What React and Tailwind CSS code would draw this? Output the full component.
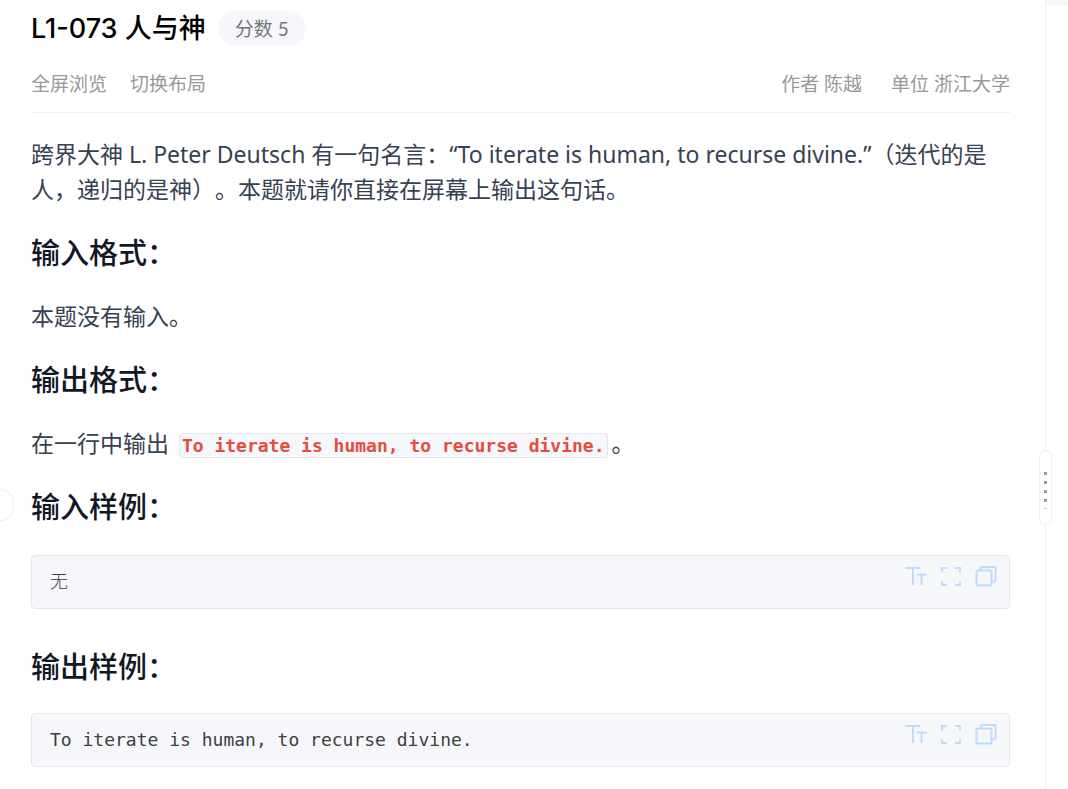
import React, { useState } from 'react';

const problem = {
  title: 'L1-073 人与神',
  score: 5,
  author: '陈越',
  organization: '浙江大学',
};

const OUTPUT_TEXT = 'To iterate is human, to recurse divine.';

const FontSizeIcon = () => (
  <svg width="22" height="22" viewBox="0 0 22 22" fill="none" stroke="currentColor" strokeWidth="2">
    <path d="M0.5 3H15.5M8 3V20M12 9.5H21.5M16.5 9.5V20" />
  </svg>
);

const FullscreenIcon = () => (
  <svg width="22" height="22" viewBox="0 0 22 22" fill="none" stroke="currentColor" strokeWidth="2">
    <path d="M2 7.5V3H7M15 3H20V7.5M20 16V20H15M7 20H2V16" />
  </svg>
);

const CopyIcon = () => (
  <svg width="22" height="22" viewBox="0 0 22 22" fill="none" stroke="currentColor" strokeWidth="2" strokeLinejoin="round">
    <rect x="1.5" y="5.5" width="15" height="15" rx="1.5" />
    <path d="M5.5 5.5V3.5a1.5 1.5 0 0 1 1.5 -1.5H19a1.5 1.5 0 0 1 1.5 1.5V15a1.5 1.5 0 0 1 -1.5 1.5H16.5" />
  </svg>
);

const SectionTitle = ({ children }) => (
  <h2 className="text-[29px] leading-9 font-medium text-gray-900">{children}</h2>
);

const Sample = ({ text }) => {
  const [large, setLarge] = useState(false);

  const handleCopy = () => {
    navigator.clipboard.writeText(text);
  };

  return (
    <div className="flex items-start justify-between rounded border border-[#e5e7eb] bg-[#f5f7fa] pl-[18px] pr-3">
      <pre
        className={`py-3 leading-7 font-light text-[#404040] font-['DejaVu_Sans_Mono','Noto_Sans_CJK_SC',monospace] ${large ? 'text-2xl' : 'text-[18px]'}`}
      >
        {text}
      </pre>
      <div className="mt-[9px] flex gap-[13px] text-[#bfdbfe]">
        <button type="button" aria-label="字号" onClick={() => setLarge(!large)}>
          <FontSizeIcon />
        </button>
        <button type="button" aria-label="全屏">
          <FullscreenIcon />
        </button>
        <button type="button" aria-label="复制" onClick={handleCopy}>
          <CopyIcon />
        </button>
      </div>
    </div>
  );
};

const App = () => {
  const [collapsed, setCollapsed] = useState(false);

  return (
    <div className="relative flex min-h-screen bg-white text-[23px] text-gray-700 font-['Lato','Noto_Sans_CJK_SC',sans-serif] [text-spacing-trim:space-all]">
      <button
        type="button"
        aria-label="展开侧栏"
        className="absolute left-0 top-[489px] h-8 w-[14px] rounded-r-full border border-l-0 border-[#eeeeee] bg-white"
      />

      <main className="min-w-0 flex-1 pl-[31px] pr-[35px] pt-[11px] pb-5">
        <div className="flex items-center gap-3">
          <h1 className="text-[27px] leading-[35px] font-medium text-black font-['Inter','Noto_Sans_CJK_SC',sans-serif]">
            {problem.title}
          </h1>
          <span className="rounded-full bg-[#f5f7fa] px-[17px] text-[19px] leading-[35px] text-[#777777]">
            分数 {problem.score}
          </span>
        </div>

        <div className="mt-6 flex justify-between border-b border-[#eeeeee] pb-[14px] text-[19px] leading-7 text-[#999999]">
          <div className="flex gap-[23px]">
            <button type="button">全屏浏览</button>
            <button type="button" onClick={() => setCollapsed(!collapsed)}>切换布局</button>
          </div>
          <div className="flex gap-[29px]">
            <span>作者 {problem.author}</span>
            <span>单位 {problem.organization}</span>
          </div>
        </div>

        <div className="mt-6 flex flex-col gap-7 leading-[35px]">
          <p className="font-['Noto_Sans','Noto_Sans_CJK_SC',sans-serif]">
            跨界大神 L. Peter Deutsch 有一句名言：“To iterate is human, to recurse divine.”（迭代的是人，递归的是神）。本题就请你直接在屏幕上输出这句话。
          </p>

          <SectionTitle>输入格式：</SectionTitle>
          <p>本题没有输入。</p>

          <SectionTitle>输出格式：</SectionTitle>
          <p>
            在一行中输出{' '}
            <code className="mx-1 rounded border border-[#e5e7eb] bg-[#f5f7fa] px-0.5 py-px text-[18px] leading-none font-bold text-[#e74c3c] font-['DejaVu_Sans_Mono',monospace]">
              {OUTPUT_TEXT}
            </code>
            。
          </p>

          <SectionTitle>输入样例：</SectionTitle>
          <div className="mt-0.5 mb-3">
            <Sample text="无" />
          </div>

          <SectionTitle>输出样例：</SectionTitle>
          <Sample text={OUTPUT_TEXT} />
        </div>
      </main>

      {!collapsed && (
        <aside className="relative w-[23px] border-l border-[#eeeeee]">
          <div className="h-[6px] bg-[#f5f7fa]" />
          <div
            role="separator"
            aria-orientation="vertical"
            className="absolute -left-[7px] top-[450px] flex h-[75px] w-[13px] cursor-col-resize flex-col items-center justify-center gap-[6px] rounded-full border border-[#eeeeee] bg-white pt-[6px]"
          >
            <i className="size-[3px] bg-[#999999]" />
            <i className="size-[3px] bg-[#999999]" />
            <i className="size-[3px] bg-[#999999]" />
            <i className="size-[3px] bg-[#999999]" />
            <i className="h-px w-[3px] bg-[#cccccc]" />
          </div>
        </aside>
      )}
    </div>
  );
};

export default App;
